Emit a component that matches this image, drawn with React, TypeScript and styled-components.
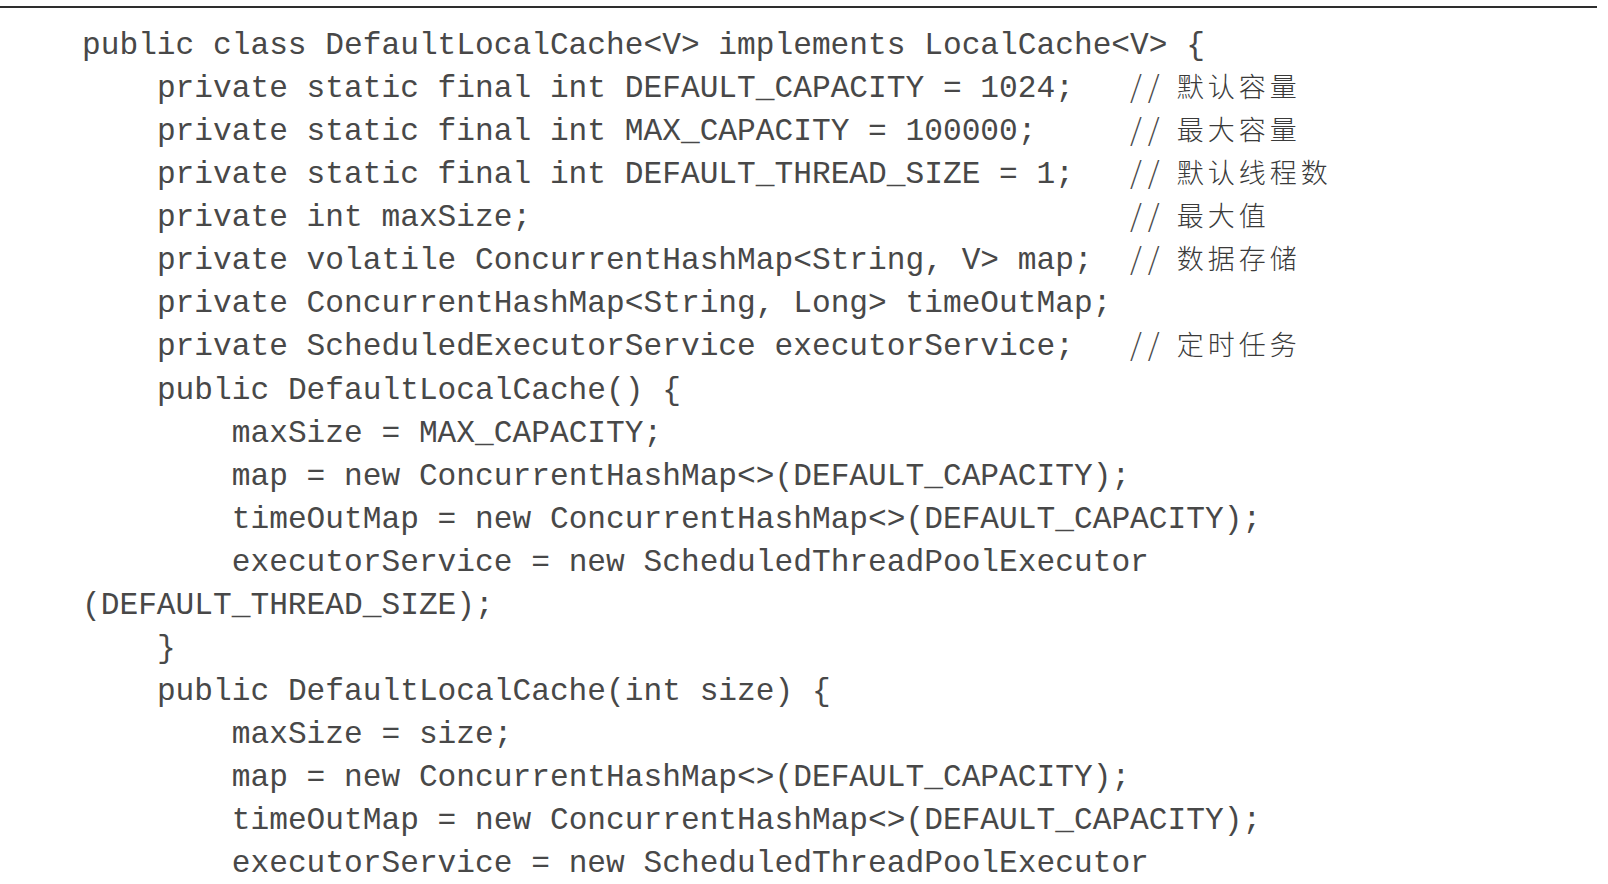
import React from "react";
import styled, { createGlobalStyle } from "styled-components";

const GlobalStyle = createGlobalStyle`
  html, body {
    margin: 0;
    padding: 0;
    background: #ffffff;
    overflow: hidden;
  }
`;

const Page = styled.div`
  width: 1608px;
  height: 884px;
  padding-top: 6px;
  box-sizing: border-box;
  background: #ffffff;
`;

const Rule = styled.div`
  width: 1597px;
  height: 2px;
  background: #2e2e2e;
`;

const CodeBlock = styled.div`
  display: flex;
  flex-direction: column;
  margin-top: 16px;
  padding-left: 82px;
`;

const Line = styled.div`
  display: grid;
  grid-template-columns: 1048px auto;
  align-items: center;
  height: 43.07px;
`;

const Code = styled.span<{ $indent: number }>`
  display: block;
  height: 43.07px;
  line-height: 43.07px;
  font-family: "Liberation Mono", "Courier New", monospace;
  font-size: 31.2px;
  color: #484848;
  white-space: pre;
  padding-left: ${(p) => p.$indent * 4 * 18.72}px;
`;

const Comment = styled.span`
  display: flex;
  align-items: center;
  gap: 11px;
  height: 43.07px;
  padding-bottom: 6px;
  box-sizing: border-box;
  font-family: "Noto Sans CJK SC", "Noto Sans", sans-serif;
  font-weight: 300;
  color: #3a3a3a;
`;

const Slashes = styled.span`
  font-size: 30px;
  line-height: 37px;
  letter-spacing: 6px;
  color: #4a4a4a;
`;

const CommentText = styled.span`
  font-size: 27px;
  line-height: 37px;
  letter-spacing: 4px;
`;

type Row = { indent: number; code: string; comment?: string };

const rows: Row[] = [
  { indent: 0, code: "public class DefaultLocalCache<V> implements LocalCache<V> {" },
  { indent: 1, code: "private static final int DEFAULT_CAPACITY = 1024;", comment: "默认容量" },
  { indent: 1, code: "private static final int MAX_CAPACITY = 100000;", comment: "最大容量" },
  { indent: 1, code: "private static final int DEFAULT_THREAD_SIZE = 1;", comment: "默认线程数" },
  { indent: 1, code: "private int maxSize;", comment: "最大值" },
  { indent: 1, code: "private volatile ConcurrentHashMap<String, V> map;", comment: "数据存储" },
  { indent: 1, code: "private ConcurrentHashMap<String, Long> timeOutMap;" },
  { indent: 1, code: "private ScheduledExecutorService executorService;", comment: "定时任务" },
  { indent: 1, code: "public DefaultLocalCache() {" },
  { indent: 2, code: "maxSize = MAX_CAPACITY;" },
  { indent: 2, code: "map = new ConcurrentHashMap<>(DEFAULT_CAPACITY);" },
  { indent: 2, code: "timeOutMap = new ConcurrentHashMap<>(DEFAULT_CAPACITY);" },
  { indent: 2, code: "executorService = new ScheduledThreadPoolExecutor" },
  { indent: 0, code: "(DEFAULT_THREAD_SIZE);" },
  { indent: 1, code: "}" },
  { indent: 1, code: "public DefaultLocalCache(int size) {" },
  { indent: 2, code: "maxSize = size;" },
  { indent: 2, code: "map = new ConcurrentHashMap<>(DEFAULT_CAPACITY);" },
  { indent: 2, code: "timeOutMap = new ConcurrentHashMap<>(DEFAULT_CAPACITY);" },
  { indent: 2, code: "executorService = new ScheduledThreadPoolExecutor" },
];

export default function App() {
  return (
    <>
      <GlobalStyle />
      <Page>
        <Rule />
        <CodeBlock>
          {rows.map((r, i) => (
            <Line key={i}>
              <Code $indent={r.indent}>{r.code}</Code>
              {r.comment ? (
                <Comment>
                  <Slashes>//</Slashes>
                  <CommentText>{r.comment}</CommentText>
                </Comment>
              ) : (
                <span />
              )}
            </Line>
          ))}
        </CodeBlock>
      </Page>
    </>
  );
}
